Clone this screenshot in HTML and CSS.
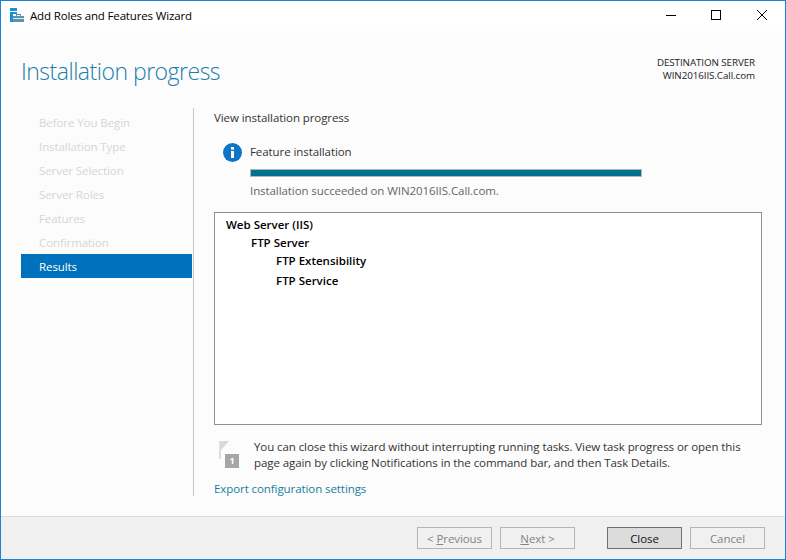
FILE: index.html
```html
<!DOCTYPE html>
<html lang="en">
<head>
<meta charset="utf-8">
<title>Add Roles and Features Wizard</title>
<link rel="stylesheet" href="styles.css">
</head>
<body>
<div class="window">
  <header class="titlebar">
    <svg class="app-icon" width="14" height="14" viewBox="0 0 14 14">
      <rect x="0" y="0" width="7" height="3" fill="#1a8fd8"/>
      <rect x="0" y="4" width="7" height="2" fill="#1a8fd8"/>
      <rect x="0" y="6" width="3" height="8" fill="#1a8fd8"/>
      <rect x="3" y="8" width="11" height="6" fill="#5f93ad"/>
      <rect x="6.5" y="6.5" width="4" height="2" fill="none" stroke="#5f93ad" stroke-width="1"/>
      <rect x="3" y="10" width="11" height="1" fill="#dbe8ef"/>
    </svg>
    <span class="title">Add Roles and Features Wizard</span>
    <div class="controls">
      <svg class="ctl" width="10" height="10" viewBox="0 0 10 10"><rect x="0" y="5" width="10" height="1" fill="#000"/></svg>
      <svg class="ctl" width="10" height="10" viewBox="0 0 10 10"><rect x="0.5" y="0.5" width="9" height="9" fill="none" stroke="#000"/></svg>
      <svg class="ctl" width="10" height="10" viewBox="0 0 10 10"><path d="M0 0L10 10M10 0L0 10" stroke="#000" fill="none" stroke-width="1"/></svg>
    </div>
  </header>
  <div class="page">
    <div class="page-head">
      <h1>Installation progress</h1>
      <div class="dest"><div>DESTINATION SERVER</div><div>WIN2016IIS.Call.com</div></div>
    </div>
    <div class="columns">
      <nav class="steps">
        <div class="step">Before You Begin</div>
        <div class="step">Installation Type</div>
        <div class="step">Server Selection</div>
        <div class="step">Server Roles</div>
        <div class="step">Features</div>
        <div class="step">Confirmation</div>
        <div class="step active">Results</div>
      </nav>
      <main class="content">
        <div class="section-label">View installation progress</div>
        <div class="status">
          <svg class="info" width="19" height="19" viewBox="0 0 19 19">
            <circle cx="9.5" cy="9.5" r="9.5" fill="#0f73c6"/>
            <rect x="8" y="8" width="3" height="7" fill="#fff"/>
            <rect x="8" y="4" width="3" height="2.6" fill="#fff"/>
          </svg>
          <div class="status-body">
            <div class="status-title">Feature installation</div>
            <div class="progress"><div class="progress-fill"></div></div>
            <div class="status-msg">Installation succeeded on WIN2016IIS.Call.com.</div>
          </div>
        </div>
        <div class="results">
          <div class="l0">Web Server (IIS)</div>
          <div class="l1">FTP Server</div>
          <div class="l2">FTP Extensibility</div>
          <div class="l2 gap">FTP Service</div>
        </div>
        <div class="notice">
          <svg class="flag" width="24" height="30" viewBox="0 0 24 30">
            <rect x="2" y="2" width="2" height="18" fill="#dcdcdc"/>
            <path d="M4 2H12L4 11Z" fill="#d9d9d9"/>
            <rect x="8" y="15" width="14" height="14" fill="#a6a6a6"/>
          </svg>
          <span class="flag-num">1</span>
          <p>You can close this wizard without interrupting running tasks. View task progress or open this page again by clicking Notifications in the command bar, and then Task Details.</p>
        </div>
        <a class="export" href="#">Export configuration settings</a>
      </main>
    </div>
  </div>
  <footer class="footer">
    <button class="btn off" disabled>&lt; <u>P</u>revious</button>
    <button class="btn off" disabled><u>N</u>ext &gt;</button>
    <button class="btn primary">Close</button>
    <button class="btn off" disabled>Cancel</button>
  </footer>
</div>
</body>
</html>
```
FILE: styles.css
```css
* { box-sizing: border-box; }
html, body { margin: 0; padding: 0; }
body { width: 786px; height: 560px; overflow: hidden; font-family: "Open Sans", "Noto Sans", sans-serif; font-size: 11.5px; letter-spacing: -0.08px; color: #1e1e1e; }
.window { width: 786px; height: 560px; border: 1px solid #1883d7; display: flex; flex-direction: column; background: #fff; }
.titlebar { height: 30px; flex: none; display: flex; align-items: center; padding-left: 9px; background: #fff; }
.app-icon { margin-right: 6px; margin-top: -2px; }
.title { color: #000; margin-top: -2px; letter-spacing: -0.15px; }
.controls { margin-left: auto; display: flex; align-items: center; padding-right: 18px; margin-top: -2px; }
.ctl { margin-left: 36px; }
.controls .ctl:nth-child(2) { margin-left: 35px; }
.page { flex: 1; display: flex; flex-direction: column; min-height: 0; background: #fcfcfc; }
.page-head { height: 77px; flex: none; display: flex; justify-content: space-between; padding: 0 30px 0 20px; }
h1 { margin: 23px 0 0; font-size: 23px; line-height: 34px; font-weight: 300; letter-spacing: -0.5px; color: #1b7ea8; }
.dest { margin-top: 25px; font-size: 9.8px; line-height: 13px; text-align: right; color: #222; }
.columns { flex: 1; display: flex; min-height: 0; padding-left: 20px; }
.steps { width: 171px; flex: none; padding-top: 2px; }
.step { height: 24px; line-height: 26px; padding-left: 18px; color: #d6d6d6; }
.step.active { background: #0071bc; color: #fff; }
.content { margin-left: 1px; height: 388px; border-left: 1px solid #c8c8c8; padding: 0 0 0 20px; width: 568px; display: flex; flex-direction: column; }
.section-label { margin-top: 1px; height: 17px; line-height: 17px; color: #333; }
.status { display: flex; margin-top: 17px; padding-left: 9px; }
.info { flex: none; }
.status-body { margin-left: 8px; }
.status-title { height: 18px; line-height: 18px; color: #333; }
.progress { margin-top: 8px; width: 392px; height: 8px; border: 1px solid #b4b4b4; }
.progress-fill { height: 100%; width: 100%; background: #00728f; }
.status-msg { margin-top: 5px; height: 18px; line-height: 18px; color: #666; }
.results { margin-top: 12px; width: 548px; height: 213px; border: 1px solid #8a919b; background: #fff; padding: 3px 0 0 11px; color: #000; font-weight: 600; letter-spacing: 0; }
.results div { height: 18px; line-height: 18px; }
.l1 { padding-left: 25px; }
.l2 { padding-left: 50px; }
.results .gap { margin-top: 2px; }
.notice { position: relative; display: flex; margin-top: 14px; padding-left: 3px; }
.flag { flex: none; }
.flag-num { position: absolute; left: 11px; top: 15px; width: 14px; text-align: center; font-size: 9px; line-height: 14px; font-weight: 700; color: #fff; }
.notice p { margin: 0 0 0 13px; line-height: 16px; width: 500px; color: #333; }
.export { margin-top: 11px; color: #1a7d9e; text-decoration: none; line-height: 14px; }
.footer { height: 43px; flex: none; background: #f0f0f0; border-top: 1px solid #dcdcdc; display: flex; align-items: center; padding-left: 416px; }
.btn { width: 75px; height: 22px; padding: 0; border: 1px solid #b5b5b5; background: #f0f0f0; font: inherit; letter-spacing: inherit; margin-right: 8px; color: #838383; }
.btn:nth-child(2) { margin-right: 32px; }
.btn.primary { background: #dcdcdc; border-color: #707070; color: #111; }
```
